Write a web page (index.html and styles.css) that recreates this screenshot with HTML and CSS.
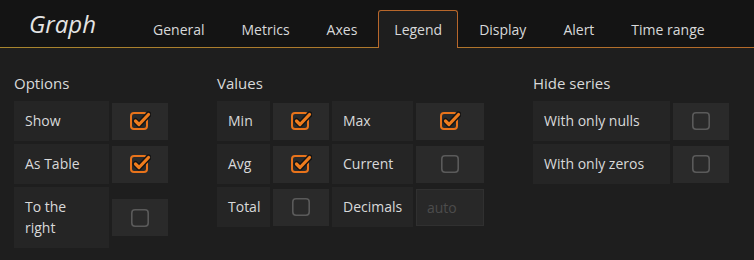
FILE: index.html
```html
<!DOCTYPE html>
<html lang="en">
<head>
    <meta charset="UTF-8">
    <title>Graph - Legend</title>
    <link rel="stylesheet" href="styles.css">
</head>
<body>
    <svg width="0" height="0" class="defs">
        <symbol id="checked" viewBox="0 0 22 22">
            <rect x="2" y="3" width="16" height="16" rx="3" fill="none" stroke="#e8731b" stroke-width="2"/>
            <polyline points="6.5,11 10,14.5 19.5,4.5" fill="none" stroke="#141414" stroke-width="6" stroke-linecap="round" stroke-linejoin="round"/>
            <polyline points="6.5,11 10,14.5 19.5,4.5" fill="none" stroke="#ef7c1d" stroke-width="3.2" stroke-linecap="round" stroke-linejoin="round"/>
        </symbol>
        <symbol id="unchecked" viewBox="0 0 22 22">
            <rect x="2.8" y="2.8" width="16.4" height="16.4" rx="3.2" fill="none" stroke="#5a5a5a" stroke-width="1.6"/>
        </symbol>
    </svg>

    <header class="editor-header">
        <div class="editor-title">Graph</div>
        <nav class="tabs">
            <div class="tab">General</div>
            <div class="tab">Metrics</div>
            <div class="tab">Axes</div>
            <div class="tab active">Legend</div>
            <div class="tab">Display</div>
            <div class="tab">Alert</div>
            <div class="tab">Time range</div>
        </nav>
    </header>

    <main class="editor-body">
        <!-- Options -->
        <section class="form-group">
            <h5 class="section-heading">Options</h5>
            <div class="form-row">
                <div class="label w-95">Show</div>
                <div class="check-cell"><svg class="cb"><use href="#checked"/></svg></div>
            </div>
            <div class="form-row">
                <div class="label w-95">As Table</div>
                <div class="check-cell"><svg class="cb"><use href="#checked"/></svg></div>
            </div>
            <div class="form-row">
                <div class="label w-95">To the right</div>
                <div class="check-cell"><svg class="cb"><use href="#unchecked"/></svg></div>
            </div>
        </section>

        <!-- Values -->
        <section class="form-group">
            <h5 class="section-heading">Values</h5>
            <div class="form-row">
                <div class="label w-53">Min</div>
                <div class="check-cell"><svg class="cb"><use href="#checked"/></svg></div>
                <div class="label w-81">Max</div>
                <div class="check-cell wide"><svg class="cb"><use href="#checked"/></svg></div>
            </div>
            <div class="form-row">
                <div class="label w-53">Avg</div>
                <div class="check-cell"><svg class="cb"><use href="#checked"/></svg></div>
                <div class="label w-81">Current</div>
                <div class="check-cell wide"><svg class="cb"><use href="#unchecked"/></svg></div>
            </div>
            <div class="form-row">
                <div class="label w-53">Total</div>
                <div class="check-cell"><svg class="cb"><use href="#unchecked"/></svg></div>
                <div class="label w-81">Decimals</div>
                <input class="decimals" type="text" placeholder="auto">
            </div>
        </section>

        <!-- Hide series -->
        <section class="form-group">
            <h5 class="section-heading">Hide series</h5>
            <div class="form-row">
                <div class="label w-137">With only nulls</div>
                <div class="check-cell"><svg class="cb"><use href="#unchecked"/></svg></div>
            </div>
            <div class="form-row">
                <div class="label w-137">With only zeros</div>
                <div class="check-cell"><svg class="cb"><use href="#unchecked"/></svg></div>
            </div>
        </section>
    </main>
</body>
</html>
```

FILE: styles.css
```css
/* Reset */
* {
    margin: 0;
    padding: 0;
    box-sizing: border-box;
}

body {
    font-family: 'Open Sans', 'Liberation Sans', sans-serif;
    font-size: 14px;
    background-color: #1e1e1e;
    color: #d8d9da;
    width: 754px;
    height: 260px;
    overflow: hidden;
}

.defs {
    position: absolute;
}

/* Header with tabs */
.editor-header {
    display: flex;
    align-items: flex-end;
    height: 48px;
    background-color: #141414;
    border-bottom: 1px solid;
    border-image: linear-gradient(to right, #a8862e, #b56a2a) 1;
}

.editor-title {
    align-self: flex-start;
    width: 137px;
    padding-left: 29px;
    margin-top: 7px;
    font-size: 24px;
    font-style: italic;
    color: #e4e4e4;
}

.tabs {
    display: flex;
}

.tab {
    height: 38px;
    line-height: 34px;
    padding: 2px 15px 0;
    margin-right: 5px;
    margin-bottom: -1px;
    border: 1px solid transparent;
    border-bottom: none;
    border-radius: 3px 3px 0 0;
    color: #d8d9da;
}

.tab.active {
    background-color: #1e1e1e;
    border-color: #b8672b;
}

/* Body */
.editor-body {
    display: flex;
    gap: 49px;
    padding: 24px 14px 0;
}

.section-heading {
    font-size: 15px;
    font-weight: normal;
    line-height: 22px;
    margin-bottom: 7px;
    color: #d8d9da;
}

.form-row {
    display: flex;
    align-items: center;
    gap: 3px;
    margin-bottom: 3px;
}

.label {
    background-color: #252525;
    padding: 9px 11px 10px;
    line-height: 21px;
    min-height: 40px;
}

.w-53 { width: 53px; }
.w-81 { width: 81px; }
.w-95 { width: 95px; }
.w-137 { width: 137px; }

.check-cell {
    display: flex;
    align-items: center;
    justify-content: center;
    width: 56px;
    height: 37px;
    background-color: #2a2a2a;
}

.check-cell.wide {
    width: 68px;
}

.cb {
    width: 22px;
    height: 22px;
}

.decimals {
    width: 68px;
    height: 37px;
    padding: 0 10px;
    background-color: #282828;
    border: 1px solid #303030;
    color: #d8d9da;
    font-family: inherit;
    font-size: 14px;
}

.decimals::placeholder {
    color: #4c4c4c;
}
```
